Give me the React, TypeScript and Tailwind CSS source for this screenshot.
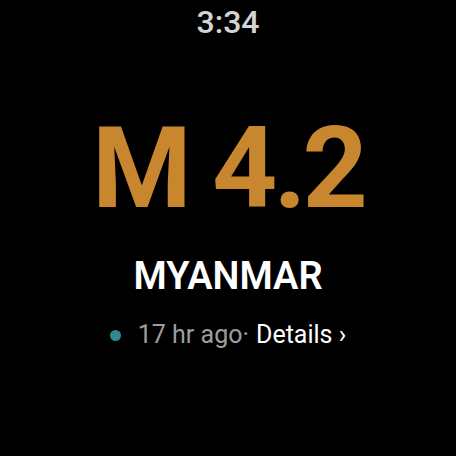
import React from "react";

export default function App() {
  return (
    <div className="w-[456px] h-[456px] bg-black flex flex-col items-center" style={{ fontFamily: "Roboto, 'Noto Sans', sans-serif" }}>
      <div className="mt-[3px] text-[32px] leading-[38px] text-[#d4d4d4] font-medium">3:34</div>
      <div className="mt-[67px] text-[114px] leading-[120px] font-bold text-[#c8862e] tracking-[-4px]">M 4.2</div>
      <div className="mt-[27px] text-[38px] leading-[42px] font-semibold text-white">MYANMAR</div>
      <div className="mt-[23px] flex items-center text-[25px] leading-[30px]">
        <span className="w-[11px] h-[11px] rounded-full bg-[#2e8a8f] mr-[17px]" />
        <span className="text-[#9e9e9e]">17 hr ago</span>
        <span className="text-[#9e9e9e]">·</span>
        <span className="text-white ml-[7px]">Details ›</span>
      </div>
    </div>
  );
}
